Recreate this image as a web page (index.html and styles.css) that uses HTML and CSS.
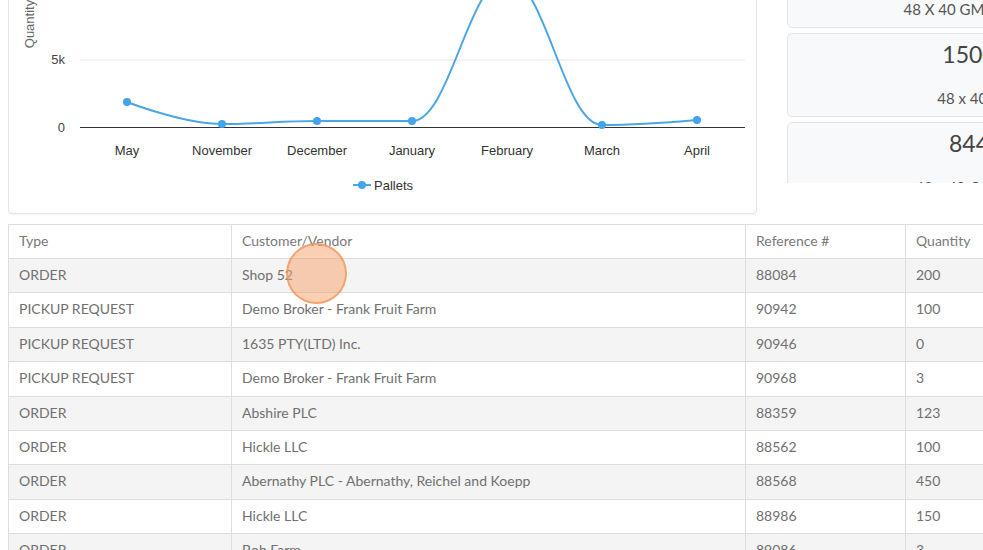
FILE: index.html
```html
<!DOCTYPE html>
<html lang="en">
<head>
    <meta charset="UTF-8">
    <meta name="viewport" content="width=device-width, initial-scale=1.0">
    <title>Dashboard</title>
    <link rel="stylesheet" href="styles.css">
</head>
<body>
    <div class="page">
        <div class="top-row">
            <div class="chart-card">
                <svg class="chart" width="747" height="302" viewBox="0 0 747 302">
                    <g transform="translate(-9, 89)">
                        <line class="grid" x1="80" y1="-74" x2="745" y2="-74"/>
                        <line class="grid" x1="80" y1="-7" x2="745" y2="-7"/>
                        <line class="grid" x1="80" y1="60" x2="745" y2="60"/>
                        <line class="axis" x1="80" y1="127.5" x2="745" y2="127.5"/>

                        <text class="y-title" x="34" y="24" transform="rotate(-90 34 24)">Quantity</text>
                        <text class="y-label" x="65" y="-70">15k</text>
                        <text class="y-label" x="65" y="-3">10k</text>
                        <text class="y-label" x="65" y="64">5k</text>
                        <text class="y-label" x="65" y="132">0</text>

                        <text class="x-label" x="127" y="155">May</text>
                        <text class="x-label" x="222" y="155">November</text>
                        <text class="x-label" x="317" y="155">December</text>
                        <text class="x-label" x="412" y="155">January</text>
                        <text class="x-label" x="507" y="155">February</text>
                        <text class="x-label" x="602" y="155">March</text>
                        <text class="x-label" x="697" y="155">April</text>

                        <path class="series" d="M127,102 C127,102 184,124 222,124 C260,124 279,121 317,121 C355,121 374,121 412,121 C450,121 469,-22 507,-22 C545,-22 564,125 602,125 C640,125 697,120 697,120"/>
                        <circle class="marker" cx="127" cy="102" r="4"/>
                        <circle class="marker" cx="222" cy="124" r="4"/>
                        <circle class="marker" cx="317" cy="121" r="4"/>
                        <circle class="marker" cx="412" cy="121" r="4"/>
                        <circle class="marker" cx="507" cy="-22" r="4"/>
                        <circle class="marker" cx="602" cy="125" r="4"/>
                        <circle class="marker" cx="697" cy="120" r="4"/>

                        <line class="legend-line" x1="353" y1="185" x2="371" y2="185"/>
                        <circle class="marker" cx="362" cy="185" r="4"/>
                        <text class="legend-text" x="374" y="189.5">Pallets</text>
                    </g>
                </svg>
            </div>

            <div class="stock-list">
                <h4 class="stock-title">Pallet Stock</h4>
                <div class="stock-card">
                    <div class="stock-qty">2300</div>
                    <div class="stock-name">48 X 40 GMA Pallet</div>
                </div>
                <div class="stock-card">
                    <div class="stock-qty">1500</div>
                    <div class="stock-name">48 x 40 B</div>
                </div>
                <div class="stock-card">
                    <div class="stock-qty">844</div>
                    <div class="stock-name">48 x 40 Grade B</div>
                </div>
            </div>
        </div>

        <table class="orders">
            <thead>
                <tr>
                    <th class="col-type">Type</th>
                    <th class="col-customer">Customer/Vendor</th>
                    <th class="col-ref">Reference #</th>
                    <th>Quantity</th>
                </tr>
            </thead>
            <tbody>
                <tr><td>ORDER</td><td>Shop 52</td><td>88084</td><td>200</td></tr>
                <tr><td>PICKUP REQUEST</td><td>Demo Broker - Frank Fruit Farm</td><td>90942</td><td>100</td></tr>
                <tr><td>PICKUP REQUEST</td><td>1635 PTY(LTD) Inc.</td><td>90946</td><td>0</td></tr>
                <tr><td>PICKUP REQUEST</td><td>Demo Broker - Frank Fruit Farm</td><td>90968</td><td>3</td></tr>
                <tr><td>ORDER</td><td>Abshire PLC</td><td>88359</td><td>123</td></tr>
                <tr><td>ORDER</td><td>Hickle LLC</td><td>88562</td><td>100</td></tr>
                <tr><td>ORDER</td><td>Abernathy PLC - Abernathy, Reichel and Koepp</td><td>88568</td><td>450</td></tr>
                <tr><td>ORDER</td><td>Hickle LLC</td><td>88986</td><td>150</td></tr>
                <tr><td>ORDER</td><td>Bob Farm</td><td>89086</td><td>3</td></tr>
            </tbody>
        </table>

        <div class="click-marker"></div>
    </div>
</body>
</html>
```

FILE: styles.css
```css
* {
    box-sizing: border-box;
    margin: 0;
    padding: 0;
}

html, body {
    overflow: hidden;
}

body {
    font-family: 'Lato', sans-serif;
    background-color: #ffffff;
    color: #666666;
}

.page {
    position: relative;
    width: 1160px;
    margin-top: -90px;
    padding: 0 8px;
}

.top-row {
    display: flex;
    align-items: flex-start;
    gap: 30px;
}

/* chart */
.chart-card {
    width: 749px;
    height: 304px;
    background-color: #ffffff;
    border: 1px solid #e4e4e4;
    border-radius: 4px;
    box-shadow: 0 1px 1px rgba(0, 0, 0, 0.04);
}

.chart {
    display: block;
    font-family: 'Liberation Sans', Arial, sans-serif;
    font-size: 13px;
}

.grid {
    stroke: #e6e6e6;
    stroke-width: 1;
}

.axis {
    stroke: #333333;
    stroke-width: 1;
}

.y-title {
    fill: #666666;
    text-anchor: middle;
}

.y-label {
    fill: #444444;
    text-anchor: end;
}

.x-label {
    fill: #333333;
    text-anchor: middle;
}

.series {
    fill: none;
    stroke: #4aa6e4;
    stroke-width: 2;
}

.marker {
    fill: #42a5ec;
}

.legend-line {
    stroke: #4aa6e4;
    stroke-width: 2;
}

.legend-text {
    fill: #333333;
}

/* stock cards */
.stock-list {
    width: 364px;
    height: 273px;
    overflow: hidden;
    display: flex;
    flex-direction: column;
    gap: 5px;
}

.stock-title {
    line-height: 29px;
    font-size: 16px;
    color: #444444;
}

.stock-card {
    flex-shrink: 0;
    background-color: #f8f9fb;
    border: 1px solid #e2e4e8;
    border-radius: 5px;
    padding: 8px 10px 9px;
    text-align: center;
}

.stock-qty {
    font-size: 23px;
    line-height: 24px;
    color: #444444;
}

.stock-name {
    margin-top: 23px;
    font-size: 15px;
    line-height: 18px;
    color: #555555;
}

/* table */
.orders {
    width: 1143px;
    margin-top: 10px;
    border-collapse: collapse;
    font-size: 14px;
    line-height: 17px;
}

.orders th,
.orders td {
    padding: 7px 10px 9.4px;
    border: 1px solid #dddddd;
    text-align: left;
    font-weight: normal;
}

.orders th {
    padding-bottom: 9px;
    color: #7a7a7a;
    background-color: #ffffff;
}

.orders td {
    color: #707070;
}

.orders tbody tr:nth-child(odd) {
    background-color: #f4f4f4;
}

.col-type {
    width: 223px;
}

.col-customer {
    width: 514px;
}

.col-ref {
    width: 160px;
}

/* click indicator over the table */
.click-marker {
    position: absolute;
    left: 286px;
    top: 333px;
    width: 61px;
    height: 61px;
    border-radius: 50%;
    background-color: rgba(248, 160, 105, 0.5);
    border: 2px solid rgba(242, 150, 90, 0.75);
}
```
